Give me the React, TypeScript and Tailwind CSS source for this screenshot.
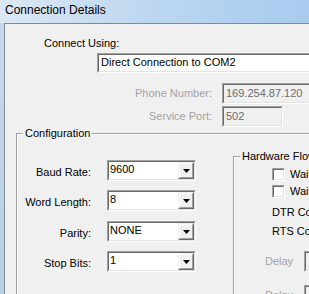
import type { ReactNode } from "react";

function Sunken({ className = "", inner = "bg-white", children }: { className?: string; inner?: string; children?: ReactNode }) {
  return (
    <div className={`border border-[#a0a0a0] border-r-white border-b-white ${className}`}>
      <div className={`h-full border border-[#696969] border-r-[#e3e3e3] border-b-[#e3e3e3] ${inner}`}>{children}</div>
    </div>
  );
}

function Combo({ value }: { value: string }) {
  return (
    <Sunken className="w-[89px] h-[21px] shrink-0">
      <div className="flex h-full">
        <span className="flex-1 pl-[1px] pt-[1px] leading-[13px]">{value}</span>
        <div className="w-[16px] h-full border border-[#f0f0f0] border-r-[#696969] border-b-[#696969]">
          <div className="h-full flex items-center justify-center border border-white border-r-[#a0a0a0] border-b-[#a0a0a0] bg-[#f0f0f0]">
            <svg width="7" height="4" viewBox="0 0 7 4">
              <path d="M0 0h7L3.5 4z" fill="#000" />
            </svg>
          </div>
        </div>
      </div>
    </Sunken>
  );
}

function Group({ label, className = "", children }: { label: string; className?: string; children?: ReactNode }) {
  return (
    <div className={`relative border border-[#a0a0a0] shadow-[inset_1px_1px_0_#fff] ${className}`}>
      <span className="absolute left-[6px] top-[-7px] px-[2px] bg-[#f0f0f0] leading-[13px] whitespace-nowrap">{label}</span>
      {children}
    </div>
  );
}

function Field({ label, value, top }: { label: string; value: string; top: string }) {
  return (
    <div className={`flex ${top}`}>
      <span className="w-[74px] text-right mt-[6px] leading-[13px]">{label}</span>
      <div className="ml-[16px]">
        <Combo value={value} />
      </div>
    </div>
  );
}

function Check({ label, className = "" }: { label: string; className?: string }) {
  return (
    <div className={`flex items-center gap-[5px] ml-[38px] h-[13px] ${className}`}>
      <div className="w-[13px] h-[13px] border border-[#a0a0a0] border-r-white border-b-white">
        <div className="h-full border border-[#696969] border-r-[#e3e3e3] border-b-[#e3e3e3] bg-white" />
      </div>
      <span className="leading-[13px] whitespace-nowrap">{label}</span>
    </div>
  );
}

export default function App() {
  return (
    <div className="w-[309px] h-[294px] overflow-hidden bg-[#c4d5e8] font-['Liberation_Sans',Arial,sans-serif] text-[11px] text-black">
      <div className="h-[23px] pl-[5px] pt-[3px] text-[12px] leading-[14px] whitespace-nowrap bg-gradient-to-r from-[#dce8f4] via-[#bcd6f0] to-[#a8cbee]">
        Connection Details
      </div>
      <div className="flex h-[271px]">
        <div className="w-[4px] shrink-0 bg-gradient-to-b from-[#c9d9ea] to-[#bccde0]" />
        <div className="w-[400px] shrink-0 border-l border-t border-[#7d8b9a] bg-[#f0f0f0]">
          <div className="ml-[39px] mt-[13px] leading-[13px]">Connect Using:</div>
          <Sunken className="ml-[92px] mt-[3px] w-[300px] h-[20px]">
            <div className="pl-[2px] pt-[1px] leading-[13px] whitespace-nowrap">Direct Connection to COM2</div>
          </Sunken>

          <div className="flex items-center mt-[10px] text-[#a3a3a3]">
            <span className="w-[207px] text-right leading-[13px]">Phone Number:</span>
            <Sunken className="ml-[10px] w-[120px] h-[21px]" inner="bg-[#f0f0f0]">
              <div className="pl-[2px] pt-[2px] leading-[13px] text-[#6d6d6d]">169.254.87.120</div>
            </Sunken>
          </div>
          <div className="flex items-center mt-[2px] text-[#a3a3a3]">
            <span className="w-[207px] text-right leading-[13px]">Service Port:</span>
            <Sunken className="ml-[10px] w-[61px] h-[21px]" inner="bg-[#f0f0f0]">
              <div className="pl-[2px] pt-[2px] leading-[13px] text-[#6d6d6d]">502</div>
            </Sunken>
          </div>

          <Group label="Configuration" className="ml-[11px] mt-[6px] w-[380px] h-[220px]">
            <div className="flex">
              <div className="w-[216px] shrink-0 pt-[26px]">
                <Field label="Baud Rate:" value="9600" top="" />
                <Field label="Word Length:" value="8" top="mt-[9px]" />
                <Field label="Parity:" value="NONE" top="mt-[10px]" />
                <Field label="Stop Bits:" value="1" top="mt-[9px]" />
              </div>
              <Group label="Hardware Flow Control" className="mt-[22px] w-[150px] h-[180px]">
                <div className="pt-[11px]">
                  <Check label="Wait for CTS" />
                  <Check label="Wait for DSR" className="mt-[4px]" />
                  <div className="ml-[38px] mt-[8px] leading-[13px] whitespace-nowrap">DTR Control:</div>
                  <div className="ml-[38px] mt-[6px] leading-[13px] whitespace-nowrap">RTS Control:</div>
                  <div className="flex items-center mt-[13px] ml-[31px]">
                    <span className="w-[39px] leading-[13px] text-[#a3a3a3]">Delay</span>
                    <Sunken className="w-[40px] h-[21px]" inner="bg-[#f0f0f0]" />
                  </div>
                  <div className="flex items-center mt-[13px] ml-[31px]">
                    <span className="w-[39px] leading-[13px] text-[#a3a3a3]">Delay</span>
                    <Sunken className="w-[40px] h-[21px]" inner="bg-[#f0f0f0]" />
                  </div>
                </div>
              </Group>
            </div>
          </Group>
        </div>
      </div>
    </div>
  );
}
